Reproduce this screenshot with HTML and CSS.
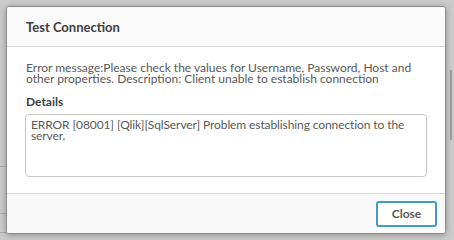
FILE: index.html
```html
<!DOCTYPE html>
<html lang="en">
<head>
    <meta charset="UTF-8">
    <title>Test Connection</title>
    <link rel="stylesheet" href="styles.css">
</head>
<body>
    <div class="page">
        <div class="page-label">P</div>
        <div class="page-label">U</div>
        <div class="page-input"></div>
        <div class="page-label">P</div>
        <div class="page-input"></div>
        <div class="page-rule"></div>
        <div class="page-label page-text">li</div>
        <div class="page-rule"></div>
        <div class="page-rule"></div>
    </div>
    <div class="page-scroll"></div>
    <div class="backdrop"></div>

    <div class="dialog">
        <div class="dialog-header">
            <h2>Test Connection</h2>
        </div>
        <div class="dialog-body">
            <p class="message">Error message:Please check the values for Username, Password, Host and other properties. Description: Client unable to establish connection</p>
            <label class="details-label">Details</label>
            <div class="details-box">ERROR [08001] [Qlik][SqlServer] Problem establishing connection to the server.</div>
        </div>
        <div class="dialog-footer">
            <button class="close-btn">Close</button>
        </div>
    </div>
</body>
</html>
```

FILE: styles.css
```css
body {
    margin: 0;
    width: 454px;
    height: 240px;
    overflow: hidden;
    background-color: #f2f2f2;
    font-family: Lato, "Open Sans", Arial, sans-serif;
    color: #404040;
    position: relative;
}

.page {
    padding: 2px 0 0 8px;
    width: 40px;
}

.page-label {
    font-size: 12px;
    color: #666;
    height: 28px;
    line-height: 20px;
}

.page-input {
    height: 26px;
    border: 1px solid #bbb;
    border-radius: 3px;
    margin-bottom: 6px;
}

.page-rule {
    border-top: 1px solid #ccc;
    margin: 18px 0 0 -8px;
    width: 60px;
}

.page-text {
    font-weight: bold;
    margin-top: 10px;
    height: 18px;
}

.page-scroll {
    position: absolute;
    right: 2px;
    top: 70px;
    width: 2px;
    height: 70px;
    background: #bbb;
}

.backdrop {
    position: absolute;
    inset: 0;
    background: rgba(0, 0, 0, 0.16);
}

.dialog {
    position: absolute;
    left: 6px;
    top: 6px;
    width: 438px;
    height: 226px;
    background: #fff;
    border: 1px solid #8c8c8c;
    border-radius: 3px;
    box-shadow: 0 1px 6px rgba(0, 0, 0, 0.3);
    display: flex;
    flex-direction: column;
    overflow: hidden;
}

.dialog-header {
    height: 39px;
    background: #fafafa;
    border-bottom: 1px solid #d9d9d9;
    display: flex;
    align-items: center;
    padding-left: 19px;
}

.dialog-header h2 {
    margin: 0;
    font-size: 13px;
    font-weight: bold;
    color: #404040;
}

.dialog-body {
    flex: 1;
    padding: 15px 18px 0 18px;
}

.message {
    margin: 0;
    font-size: 12px;
    line-height: 11px;
    color: #595959;
    padding-left: 1px;
}

.details-label {
    display: block;
    font-size: 12px;
    font-weight: bold;
    color: #404040;
    margin: 10px 0 5px 1px;
}

.details-box {
    height: 53px;
    border: 1px solid #c8c8c8;
    border-radius: 4px;
    padding: 4px 5px;
    font-size: 12px;
    line-height: 11px;
    letter-spacing: -0.1px;
    color: #595959;
}

.dialog-footer {
    height: 39px;
    background: #f9f9f9;
    border-top: 1px solid #d9d9d9;
    display: flex;
    align-items: center;
    justify-content: flex-end;
    padding-right: 8px;
}

.close-btn {
    width: 61px;
    height: 26px;
    border: 2px solid #3d9fbd;
    border-radius: 3px;
    background: #fff;
    color: #595959;
    font-family: inherit;
    font-size: 12px;
    font-weight: bold;
    cursor: pointer;
}
```
